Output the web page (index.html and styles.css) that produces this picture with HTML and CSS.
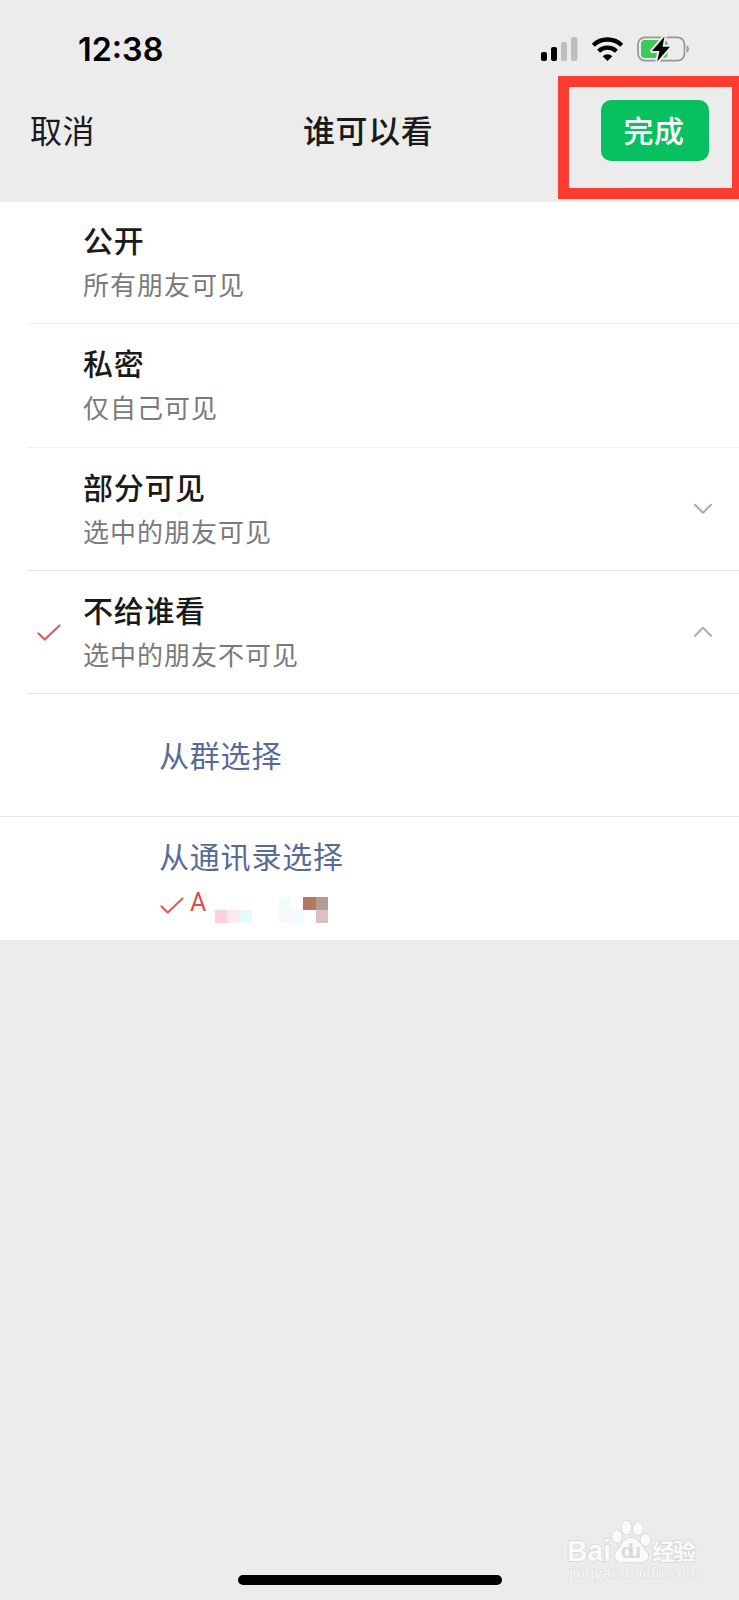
FILE: index.html
```
<!DOCTYPE html>
<html lang="zh-CN">
<head>
<meta charset="utf-8">
<title>谁可以看</title>
<link rel="stylesheet" href="styles.css">
</head>
<body>
<div class="screen">
  <header class="status">
    <span class="time">12:38</span>
    <svg class="status-icons" width="150" height="28" viewBox="0 0 150 28">
      <rect x="1" y="16" width="6" height="9" rx="2"/>
      <rect x="11" y="11" width="6" height="14" rx="2"/>
      <rect x="21" y="6" width="6" height="19" rx="2" fill="#bfbfbf"/>
      <rect x="31" y="1" width="6.500" height="24" rx="2" fill="#bfbfbf"/>
      <g fill="none" stroke="#000" stroke-width="4.300">
        <path d="M53.300 9.200a20.600 20.600 0 0 1 28.400 0"/>
        <path d="M58.600 15.200a12.800 12.800 0 0 1 17.800 0"/>
      </g>
      <path d="M62.600 20.200a7 7 0 0 1 9.800 0l-4.900 4.900z"/>
      <rect x="98" y="1.400" width="46.500" height="23.200" rx="7" fill="none" stroke="#979797" stroke-width="1.700"/>
      <rect x="101" y="4" width="26.500" height="18" rx="4" fill="#3acb59"/>
      <path d="M146.600 9.200c3 .8 3 6.800 0 7.600z" fill="#979797"/>
      <path d="M124.500 0.500 112 15h7.500l-2.300 10.500L130 10.700h-7.500z" stroke="#ececec" stroke-width="4" stroke-linejoin="round"/>
      <path d="M124.500 0.500 112 15h7.500l-2.300 10.500L130 10.700h-7.500z"/>
    </svg>
  </header>
  <nav class="nav">
    <span class="cancel">取消</span>
    <h1 class="heading">谁可以看</h1>
    <div class="highlight"><button class="done">完成</button></div>
  </nav>
  <main class="list">
    <section class="row">
      <div class="mark"></div>
      <div class="cell"><h2 class="title">公开</h2><p class="sub">所有朋友可见</p></div>
    </section>
    <section class="row">
      <div class="mark"></div>
      <div class="cell"><h2 class="title">私密</h2><p class="sub">仅自己可见</p></div>
    </section>
    <section class="row">
      <div class="mark"></div>
      <div class="cell"><h2 class="title">部分可见</h2><p class="sub">选中的朋友可见</p></div>
      <svg class="chevron" width="20" height="12" viewBox="0 0 20 12"><path d="M2 1.800l8 8 8-8"/></svg>
    </section>
    <section class="row">
      <div class="mark"><svg class="check" width="24" height="18" viewBox="0 0 24 18"><path d="M1.500 9.500l6.300 6L22.500 1.500"/></svg></div>
      <div class="cell"><h2 class="title">不给谁看</h2><p class="sub">选中的朋友不可见</p></div>
      <svg class="chevron" width="20" height="12" viewBox="0 0 20 12"><path d="M2 9.800l8-8 8 8"/></svg>
    </section>
    <section class="source groups"><span class="link">从群选择</span></section>
    <section class="source contacts">
      <span class="link">从通讯录选择</span>
      <div class="picked">
        <svg class="check" width="24" height="18" viewBox="0 0 24 18"><path d="M1.500 9.500l6.300 6L22.500 1.500"/></svg>
        <span class="name">A</span>
        <svg class="mosaic" width="116" height="28" viewBox="0 0 116 28" shape-rendering="crispEdges">
          <rect x="0" y="13" width="12" height="13" fill="#ffd0dc"/>
          <rect x="12" y="13" width="13" height="13" fill="#fde9ee"/>
          <rect x="25" y="13" width="12" height="13" fill="#e6fbfb"/>
          <rect x="64" y="0" width="12" height="13" fill="#effdfd"/>
          <rect x="64" y="13" width="12" height="13" fill="#faf5ff"/>
          <rect x="76" y="13" width="12" height="13" fill="#f3fdff"/>
          <rect x="88" y="0" width="13" height="13" fill="#b37860"/>
          <rect x="101" y="0" width="12" height="13" fill="#b49c96"/>
          <rect x="101" y="13" width="12" height="13" fill="#dcc2be"/>
        </svg>
      </div>
    </section>
  </main>
  <footer class="footer">
    <svg class="watermark" width="140" height="70" viewBox="0 0 140 70">
      <g fill="#fafafa" stroke="#d6d6d6" stroke-width="1.600" paint-order="stroke">
        <text class="wm-latin" x="0" y="44" textLength="44" lengthAdjust="spacingAndGlyphs">Bai</text>
        <ellipse cx="50" cy="19.500" rx="5" ry="6.300"/>
        <ellipse cx="59.500" cy="10.500" rx="5" ry="7"/>
        <ellipse cx="71" cy="11.500" rx="5" ry="6.500"/>
        <ellipse cx="78.500" cy="23" rx="5" ry="6"/>
        <path d="M64 21c6 0 8 4 11 8 4 5 7 7 6 11-1 5-6 6-10 5.500-5-.7-9-.7-14 0-4 .5-9-1-9-6 0-5 3-6 6-11 2-4 5-7.500 10-7.500z"/>
        <text class="wm-cjk" x="85" y="43" textLength="44">经验</text>
        <text class="wm-url" x="2" y="61" textLength="130">jingyan.baidu.com</text>
      </g>
      <text class="wm-du" x="54" y="41" textLength="20">du</text>
    </svg>
    <div class="home-bar"></div>
  </footer>
</div>
</body>
</html>
```
FILE: styles.css
```
* { box-sizing: border-box; margin: 0; padding: 0; }
body {
  background: #ececec;
  color: #1a1a1a;
  font-family: "Liberation Sans", "Noto Sans CJK SC", sans-serif;
}
.screen { width: 739px; height: 1600px; display: flex; flex-direction: column; overflow: hidden; }
.status { height: 76px; padding: 35px 49px 0 78px; display: flex; justify-content: space-between; align-items: flex-start; }
.time { font: 600 32.300px/30px Inter, sans-serif; color: #000; }
.status-icons { margin-top: 1px; }
.nav { height: 126px; display: flex; justify-content: space-between; align-items: flex-start; }
.cancel, .heading { font-family: "Noto Sans CJK SC", sans-serif; font-size: 32px; line-height: 46px; letter-spacing: .6px; margin-top: 30px; }
.cancel { width: 273px; padding-left: 30px; }
.heading { font-weight: 500; flex: 1; padding-left: 30px; }
.highlight { width: 181px; height: 123px; border: 11px solid #fc3b31; border-right-width: 7px; padding: 13px 0 0 32px; }
.done {
  display: block; width: 108px; height: 61px; border: 0; border-radius: 10px;
  background: #07c160; color: #fff;
  font: 500 30px/57px "Noto Sans CJK SC", sans-serif; letter-spacing: .6px; padding: 0 2px 3px 0;
}
.list { background: #fff; height: 738px; font-family: "Noto Sans CJK SC", sans-serif; }
.row { height: 123.250px; padding-left: 28px; display: flex; align-items: center; border-bottom: 1px solid transparent; border-image: linear-gradient(to right, transparent 28px, #e2e2e2 28px) 1; }
.row:first-child { height: 122.250px; }
.row:nth-child(-n+2) { border-image: linear-gradient(to right, transparent 28px, #efefef 28px) 1; }
.mark { width: 55px; padding: 3px 0 0 9px; }
.check, .chevron { display: block; fill: none; stroke-linecap: round; stroke-linejoin: round; }
.check { stroke: #df5c5c; stroke-width: 2.200; }
.cell { flex: 1; padding-bottom: 1px; }
.row:first-child .cell { padding-bottom: 2px; }
.title { font-size: 30px; font-weight: 500; line-height: 44px; letter-spacing: .7px; }
.sub { font-size: 26px; font-weight: 400; line-height: 45px; letter-spacing: 1px; color: #7a7a7a; }
.chevron { margin-right: 26px; stroke: #b0b0b0; stroke-width: 2.200; }
.source { padding-left: 159px; }
.groups { height: 123.250px; border-bottom: 1px solid #e8e8e8; padding-top: 38px; }
.contacts { padding-top: 16px; }
.link { display: block; font-size: 30px; line-height: 44px; letter-spacing: .8px; color: #576b95; }
.picked { display: flex; align-items: flex-start; height: 40px; padding-top: 20px; }
.picked .check { margin-left: 1px; }
.name { width: 31px; padding-left: 6px; font: 400 25px/28px Roboto, sans-serif; color: #d94c4c; margin-top: -8px; }
.footer { margin-top: auto; display: flex; flex-direction: column; align-items: center; padding-bottom: 15px; }
.watermark { align-self: flex-end; margin-right: 32px; margin-bottom: -12px; }
.wm-latin { font: 700 30px "Liberation Sans", sans-serif; }
.wm-du { font: 700 20px "Liberation Sans", sans-serif; fill: #dadada; }
.wm-cjk { font: 700 23px "Noto Sans CJK SC", sans-serif; }
.wm-url { font: 400 15.500px "Liberation Sans", sans-serif; stroke-width: 1; }
.home-bar { width: 264px; height: 10px; border-radius: 5px; background: #000; }
```
